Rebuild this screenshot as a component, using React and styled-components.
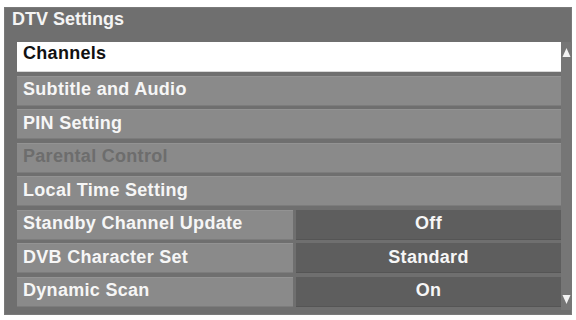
import React from "react";
import styled, { createGlobalStyle } from "styled-components";

const Global = createGlobalStyle`
  html, body { margin: 0; padding: 0; background: #ffffff; }
  body { font-family: "Liberation Sans", Arial, sans-serif; }
`;

const Page = styled.div`
  width: 576px;
  height: 320px;
  padding: 7px 4px 5px 4px;
  box-sizing: border-box;
`;

const Panel = styled.div`
  width: 568px;
  height: 308px;
  background: #6f6f6f;
  box-shadow: inset 0 0 0 1px #7a7a7a;
  display: flex;
  flex-direction: column;
  box-sizing: border-box;
`;

const Title = styled.div`
  height: 35px;
  padding: 1px 0 0 8px;
  box-sizing: border-box;
  color: #f4f4f4;
  font-size: 18px;
  font-weight: bold;
  line-height: 22px;
`;

const Body = styled.div`
  display: flex;
  flex: 1;
  padding-left: 13px;
`;

const List = styled.div`
  width: 544px;
  display: flex;
  flex-direction: column;
  gap: 3.5px;
`;

const Row = styled.div`
  display: flex;
  gap: 3px;
  height: 30px;
`;

const Cell = styled.div`
  flex: ${(p) => (p.$wide ? "1" : "0 0 276px")};
  display: flex;
  align-items: center;
  box-sizing: border-box;
  padding: 0 0 ${(p) => (p.$selected ? "7px" : "2px")} 6px;
  background: ${(p) => (p.$selected ? "#ffffff" : "#8a8a8a")};
  color: ${(p) => (p.$selected ? "#111111" : p.$disabled ? "#6d6d6d" : "#f6f6f6")};
  font-size: 18px;
  font-weight: bold;
  letter-spacing: 0.3px;
  white-space: nowrap;
  box-shadow: ${(p) =>
    p.$selected
      ? "inset 0 -1px 0 #d8d8d8"
      : "inset 0 1px 0 #939393, inset 0 -1px 0 #7c7c7c"};
`;

const Value = styled.div`
  flex: 1;
  display: flex;
  align-items: center;
  justify-content: center;
  padding-bottom: 2px;
  box-sizing: border-box;
  background: #5e5e5e;
  color: #f6f6f6;
  font-size: 18px;
  font-weight: bold;
  letter-spacing: 0.3px;
  box-shadow: inset 0 -1px 0 #555555;
`;

const Scroll = styled.div`
  width: 11px;
  display: flex;
  flex-direction: column;
  justify-content: space-between;
  align-items: center;
  padding: 5px 0 5px 0;
  box-sizing: border-box;
  background: #767676;
  margin-bottom: 5px;
`;

const Arrow = ({ down }) => (
  <svg width="9" height="11" viewBox="0 0 9 11">
    {down ? (
      <polygon points="0.5,1 8.5,1 4.5,10" fill="#f2f2f2" />
    ) : (
      <polygon points="4.5,1 8.5,10 0.5,10" fill="#f2f2f2" />
    )}
  </svg>
);

const items = [
  { label: "Channels", selected: true },
  { label: "Subtitle and Audio" },
  { label: "PIN Setting" },
  { label: "Parental Control", disabled: true },
  { label: "Local Time Setting" },
  { label: "Standby Channel Update", value: "Off" },
  { label: "DVB Character Set", value: "Standard" },
  { label: "Dynamic Scan", value: "On" },
];

export default function App() {
  return (
    <>
      <Global />
      <Page>
        <Panel>
          <Title>DTV Settings</Title>
          <Body>
            <List>
              {items.map((it) => (
                <Row key={it.label}>
                  <Cell
                    $wide={!it.value}
                    $selected={it.selected}
                    $disabled={it.disabled}
                  >
                    {it.label}
                  </Cell>
                  {it.value && <Value>{it.value}</Value>}
                </Row>
              ))}
            </List>
            <Scroll>
              <Arrow />
              <Arrow down />
            </Scroll>
          </Body>
        </Panel>
      </Page>
    </>
  );
}
